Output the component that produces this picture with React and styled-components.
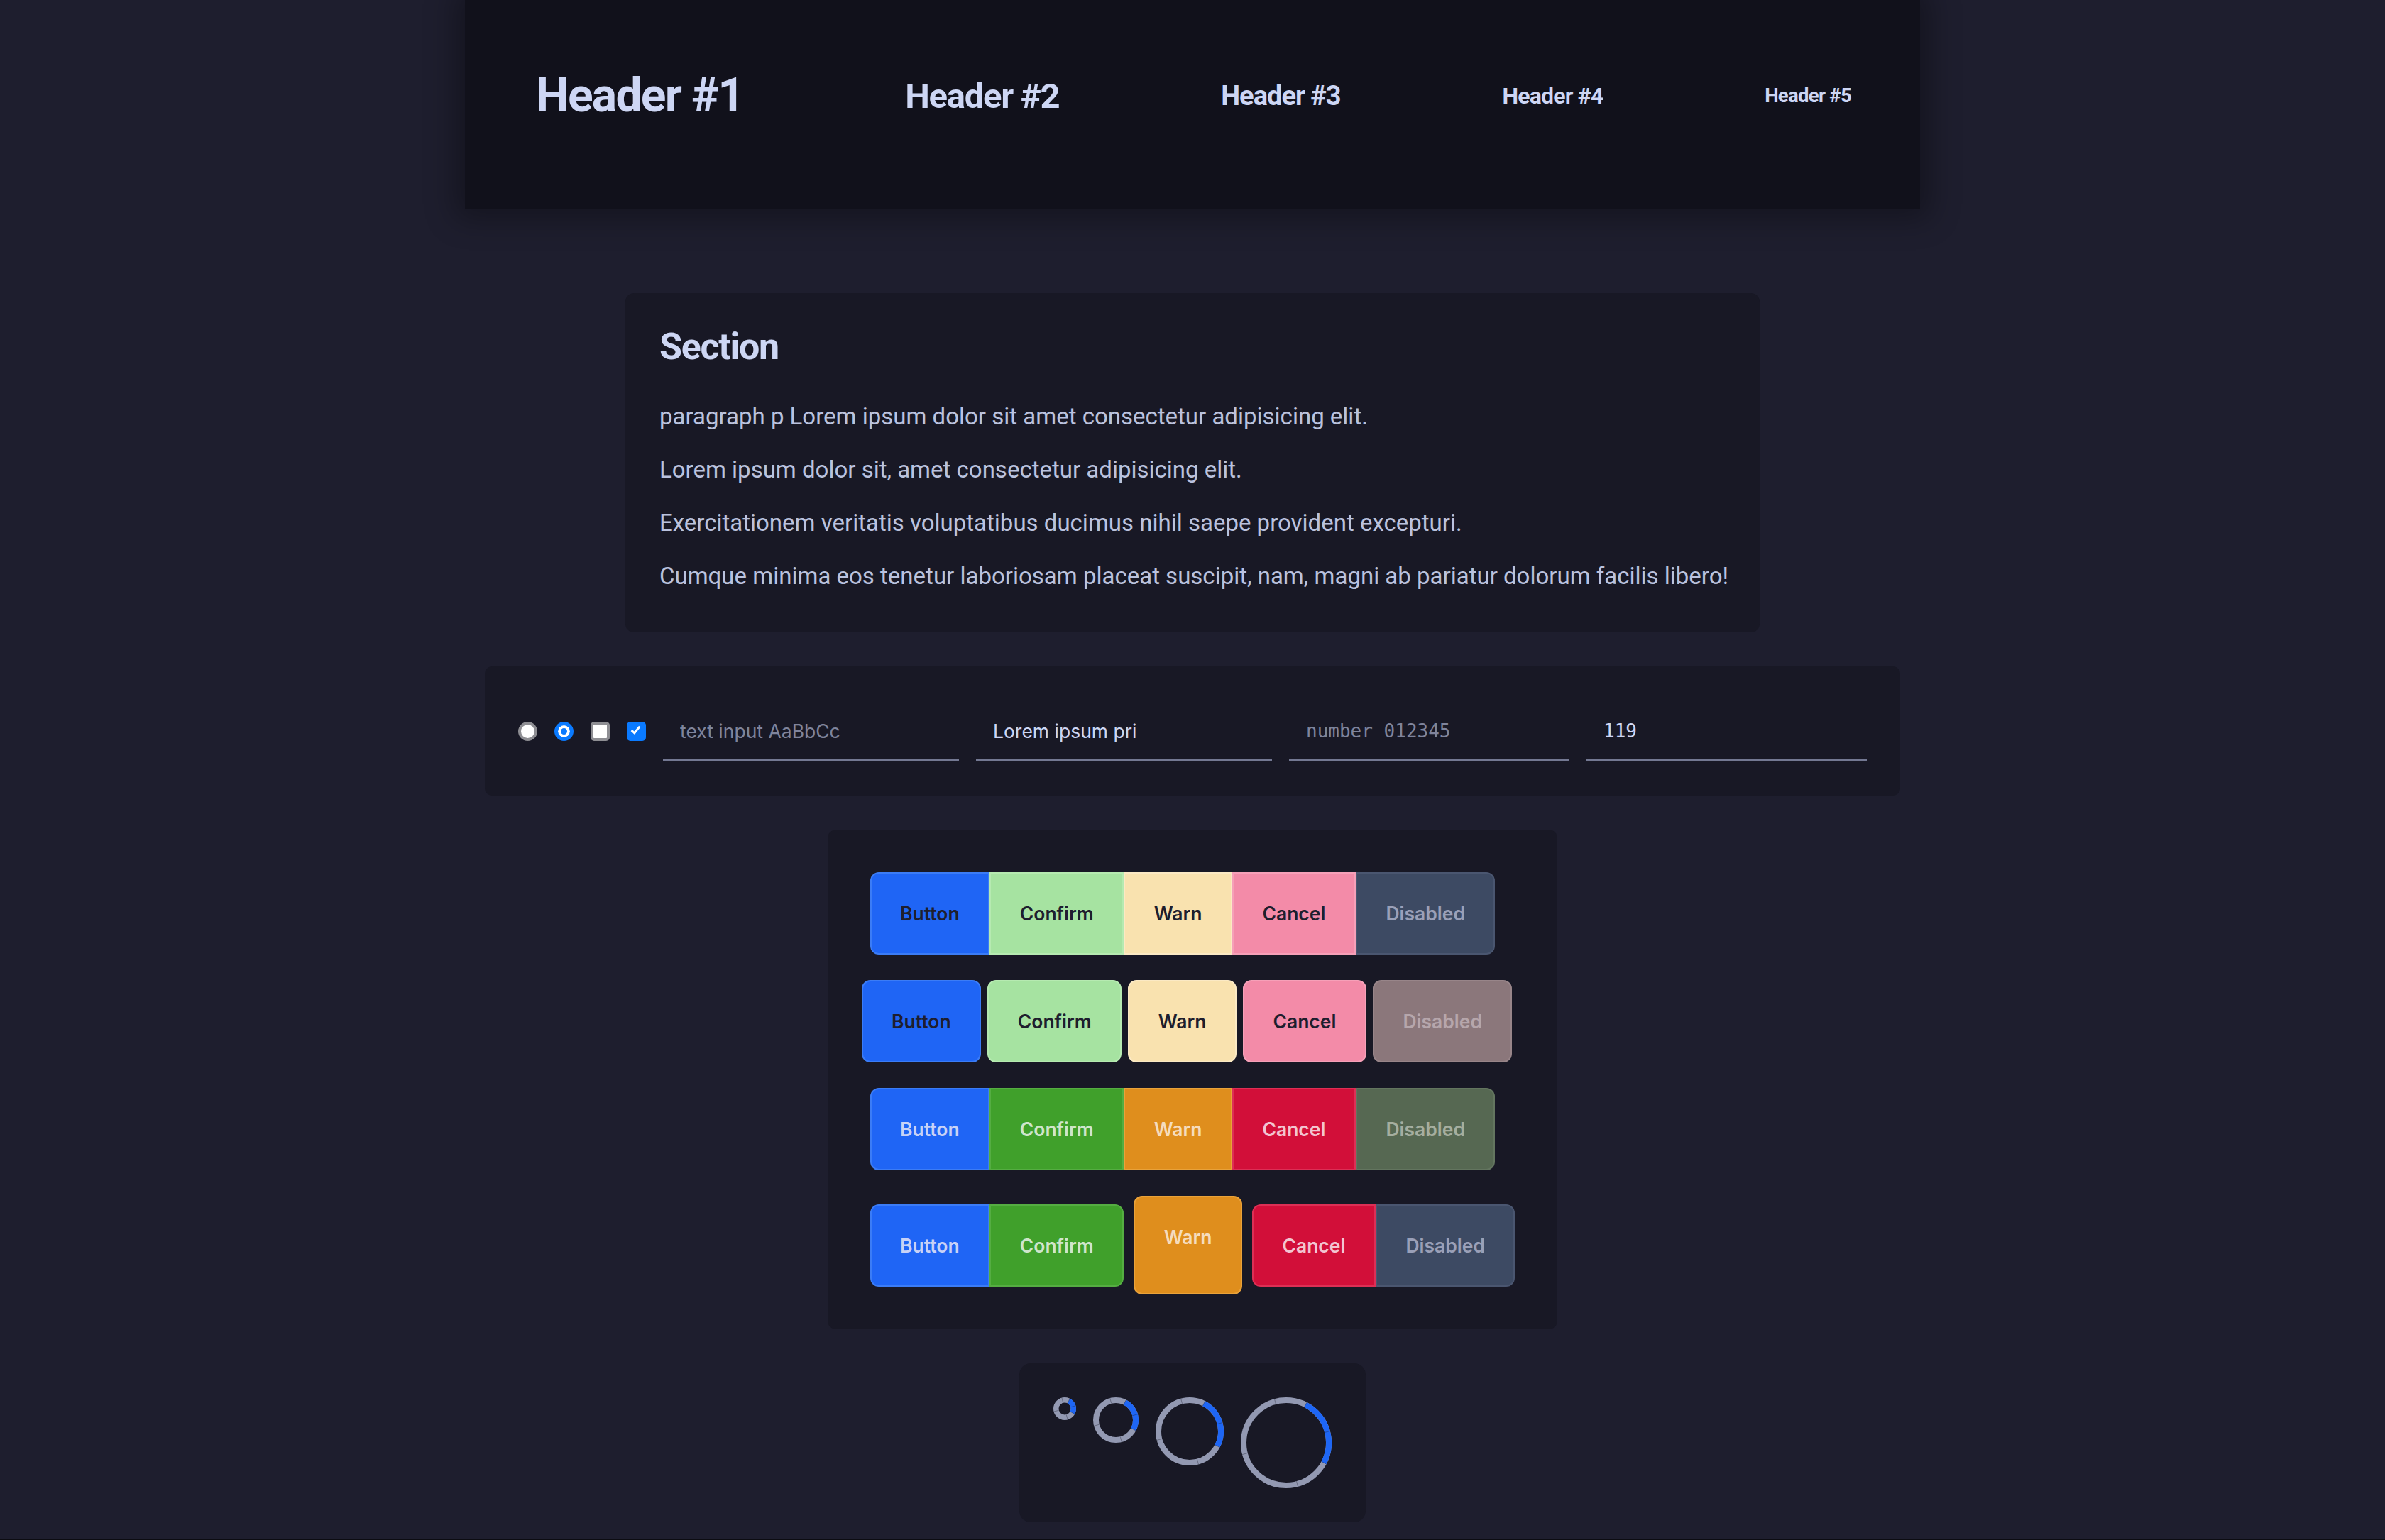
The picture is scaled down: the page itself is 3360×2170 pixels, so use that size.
import React from 'react';
import styled, { createGlobalStyle } from 'styled-components';

const Global = createGlobalStyle`
  html, body { margin: 0; padding: 0; background: #1e1e2e; }
  body { font-family: Roboto, "Noto Sans", sans-serif; color: #cdd6f4; }
  *, *::before, *::after { box-sizing: border-box; }
`;

const Page = styled.main`
  display: flex;
  flex-direction: column;
  align-items: center;
  gap: 48px;
  min-height: 2170px;
  border-bottom: 2px solid #0c0c12;
`;

const TopBar = styled.header`
  width: 2050px;
  height: 294px;
  flex: none;
  background: #11111b;
  display: flex;
  align-items: center;
  justify-content: space-between;
  padding: 0 97px 24px 100px;
  box-shadow: 0 0 40px 14px rgba(0, 0, 0, 0.32);
  margin-bottom: 71px;
`;

const Heading = styled.h1`
  margin: 0;
  font-weight: 700;
  line-height: 1;
  color: #cdd6f4;
  font-size: ${(p) => p.$size}px;
  letter-spacing: -0.026em;
`;

const Card = styled.section`
  width: 1598px;
  background: #181825;
  border-radius: 12px;
  padding: 45px 48px 59px;
  display: flex;
  flex-direction: column;
  gap: 34px;
`;

const CardTitle = styled.h2`
  margin: 0 0 12px;
  font-size: 52px;
  line-height: 62px;
  font-weight: 700;
  color: #cdd6f4;
  letter-spacing: -0.025em;
`;

const Para = styled.p`
  margin: 0;
  font-size: 33px;
  line-height: 41px;
  color: #bac2de;
  white-space: nowrap;
`;

const Controls = styled.div`
  display: flex;
  align-items: center;
  gap: 24px;
  padding: 49px 47px 48px;
  background: #181825;
  border-radius: 10px;
`;

const Radio = styled.input.attrs({ type: 'radio' })`
  appearance: none;
  margin: 0;
  flex: none;
  width: 27px;
  height: 27px;
  border-radius: 50%;
  background: #fff;
  border: 4px solid #8e8e93;
  &:checked {
    background: #0a7aff;
    border: 5px solid #0a7aff;
    box-shadow: inset 0 0 0 4px #fff;
  }
`;

const Check = styled.input.attrs({ type: 'checkbox' })`
  appearance: none;
  margin: 0;
  flex: none;
  width: 27px;
  height: 27px;
  border-radius: 5px;
  background: #fff;
  border: 4px solid #8e8e93;
  position: relative;
  &:checked {
    background: #0a7aff;
    border-color: #0a7aff;
  }
  &:checked::after {
    content: '';
    position: absolute;
    left: 5px;
    top: 0px;
    width: 7px;
    height: 13px;
    border: solid #fff;
    border-width: 0 3.5px 3.5px 0;
    transform: rotate(40deg);
  }
`;

const Field = styled.input`
  flex: none;
  width: ${(p) => p.$w}px;
  margin: 0;
  background: transparent;
  border: none;
  border-bottom: 3px solid #737892;
  border-radius: 0;
  padding: 26px 24px 24px;
  font-family: ${(p) => (p.$mono ? '"DejaVu Sans Mono", monospace' : 'Inter, sans-serif')};
  font-size: ${(p) => (p.$mono ? 26 : 26.5)}px;
  line-height: 32px;
  color: #cdd6f4;
  outline: none;
  &::placeholder { color: #7f849c; opacity: 1; }
  &::-webkit-inner-spin-button, &::-webkit-outer-spin-button { -webkit-appearance: none; margin: 0; }
`;

const ButtonPanel = styled.div`
  display: flex;
  flex-direction: column;
  align-items: flex-start;
  gap: 24px;
  padding: 48px;
  background: #181825;
  border-radius: 12px;
`;

const Row = styled.div`
  display: flex;
  align-items: flex-start;
  gap: ${(p) => p.$gap || 0}px;
`;

const Btn = styled.button`
  flex: none;
  font-family: Inter, sans-serif;
  font-weight: 600;
  font-size: 26.5px;
  line-height: 32px;
  padding: 40px 40.5px ${(p) => (p.$tall ? 63 : 40)}px;
  margin: ${(p) => (p.$tall ? '0 2px' : '0')};
  border: 2px solid ${(p) => p.$c.border};
  background: ${(p) => p.$c.bg};
  color: ${(p) => p.$c.fg};
  border-radius: 12px;
  cursor: pointer;
  &:disabled { cursor: default; }
`;

const Group = styled.div`
  display: flex;
  margin: 12px;
  & > ${Btn} { border-radius: 0; }
  & > ${Btn}:first-child { border-radius: 12px 0 0 12px; }
  & > ${Btn}:last-child { border-radius: 0 12px 12px 0; }
`;

const SpinnerPanel = styled.div`
  display: flex;
  align-items: flex-start;
  gap: 24px;
  padding: 48px;
  background: #181825;
  border-radius: 16px;
`;

const SpinSvg = styled.svg`
  display: block;
  flex: none;
`;

const light = {
  primary: { bg: '#1f65f5', border: '#3b7cf6', fg: '#1e1e2e' },
  confirm: { bg: '#a6e3a1', border: '#b6eab1', fg: '#1e1e2e' },
  warn: { bg: '#f9e2af', border: '#fbe9c4', fg: '#1e1e2e' },
  cancel: { bg: '#f38ba8', border: '#f6a0b8', fg: '#1e1e2e' },
  disabled: { bg: '#3d4a63', border: '#4a5670', fg: '#9aa0b8' },
  disabledMuted: { bg: '#8b777b', border: '#988589', fg: '#b6a6ab' },
};

const dark = {
  primary: { bg: '#1f65f5', border: '#3b7cf6', fg: '#c8d2f6' },
  confirm: { bg: '#40a02b', border: '#55ad42', fg: '#cfe5cb' },
  warn: { bg: '#df8e1d', border: '#e9a23a', fg: '#f5dcbd' },
  cancel: { bg: '#d20f39', border: '#dd2f55', fg: '#f2c5d1' },
  disabledGreen: { bg: '#566852', border: '#63755f', fg: '#a5ae9f' },
  disabled: { bg: '#3d4a63', border: '#4a5670', fg: '#9aa0b8' },
};

const labels = [
  ['primary', 'Button'],
  ['confirm', 'Confirm'],
  ['warn', 'Warn'],
  ['cancel', 'Cancel'],
];

function Spinner({ size, stroke }) {
  const c = size / 2;
  const r = (size - stroke) / 2;
  const C = 2 * Math.PI * r;
  const start = 27;
  const end = 118;
  const arc = ((end - start) / 360) * C;
  const ticks = [345, 75, 165, 255, start, end];
  const pt = (a, R) => {
    const rad = (a * Math.PI) / 180;
    return [c + R * Math.sin(rad), c - R * Math.cos(rad)];
  };
  return (
    <SpinSvg width={size} height={size} viewBox={`0 0 ${size} ${size}`}>
      <circle cx={c} cy={c} r={r} fill="none" stroke="#9399b2" strokeWidth={stroke} />
      <circle
        cx={c}
        cy={c}
        r={r}
        fill="none"
        stroke="#1e66f5"
        strokeWidth={stroke}
        strokeDasharray={`${arc} ${C}`}
        transform={`rotate(${start - 90} ${c} ${c})`}
      />
      {ticks.map((a) => {
        const [x1, y1] = pt(a, r - stroke / 2);
        const [x2, y2] = pt(a, r + stroke / 2);
        return <line key={a} x1={x1} y1={y1} x2={x2} y2={y2} stroke="rgba(24,24,37,0.35)" strokeWidth="1" />;
      })}
    </SpinSvg>
  );
}

export default function App() {
  const noop = () => {};
  return (
    <>
      <Global />
      <Page>
        <TopBar>
          <Heading as="h1" $size={66}>Header #1</Heading>
          <Heading as="h2" $size={49}>Header #2</Heading>
          <Heading as="h3" $size={38}>Header #3</Heading>
          <Heading as="h4" $size={32}>Header #4</Heading>
          <Heading as="h5" $size={27.5}>Header #5</Heading>
        </TopBar>

        <Card>
          <CardTitle>Section</CardTitle>
          <Para>paragraph p Lorem ipsum dolor sit amet consectetur adipisicing elit.</Para>
          <Para>Lorem ipsum dolor sit, amet consectetur adipisicing elit.</Para>
          <Para>Exercitationem veritatis voluptatibus ducimus nihil saepe provident excepturi.</Para>
          <Para>Cumque minima eos tenetur laboriosam placeat suscipit, nam, magni ab pariatur dolorum facilis libero!</Para>
        </Card>

        <Controls>
          <Radio name="r1" checked={false} onChange={noop} />
          <Radio name="r2" checked onChange={noop} />
          <Check checked={false} onChange={noop} />
          <Check checked onChange={noop} />
          <Field $w={417} type="text" placeholder="text input AaBbCc" />
          <Field $w={417} type="text" defaultValue="Lorem ipsum pri" />
          <Field $w={395} $mono type="number" placeholder="number 012345" />
          <Field $w={395} $mono type="number" defaultValue={119} />
        </Controls>

        <ButtonPanel>
          <Row>
            <Group>
              {labels.map(([k, t]) => (
                <Btn key={k} $c={light[k]}>{t}</Btn>
              ))}
              <Btn $c={light.disabled} disabled>Disabled</Btn>
            </Group>
          </Row>
          <Row $gap={9}>
            {labels.map(([k, t]) => (
              <Btn key={k} $c={light[k]}>{t}</Btn>
            ))}
            <Btn $c={light.disabledMuted} disabled>Disabled</Btn>
          </Row>
          <Row>
            <Group>
              {labels.map(([k, t]) => (
                <Btn key={k} $c={dark[k]}>{t}</Btn>
              ))}
              <Btn $c={dark.disabledGreen} disabled>Disabled</Btn>
            </Group>
          </Row>
          <Row>
            <Group>
              <Btn $c={dark.primary}>Button</Btn>
              <Btn $c={dark.confirm}>Confirm</Btn>
            </Group>
            <Btn $c={dark.warn} $tall>Warn</Btn>
            <Group>
              <Btn $c={dark.cancel}>Cancel</Btn>
              <Btn $c={dark.disabled} disabled>Disabled</Btn>
            </Group>
          </Row>
        </ButtonPanel>

        <SpinnerPanel>
          <Spinner size={32} stroke={7.5} />
          <Spinner size={64} stroke={8} />
          <Spinner size={96} stroke={8} />
          <Spinner size={128} stroke={8} />
        </SpinnerPanel>
      </Page>
    </>
  );
}
